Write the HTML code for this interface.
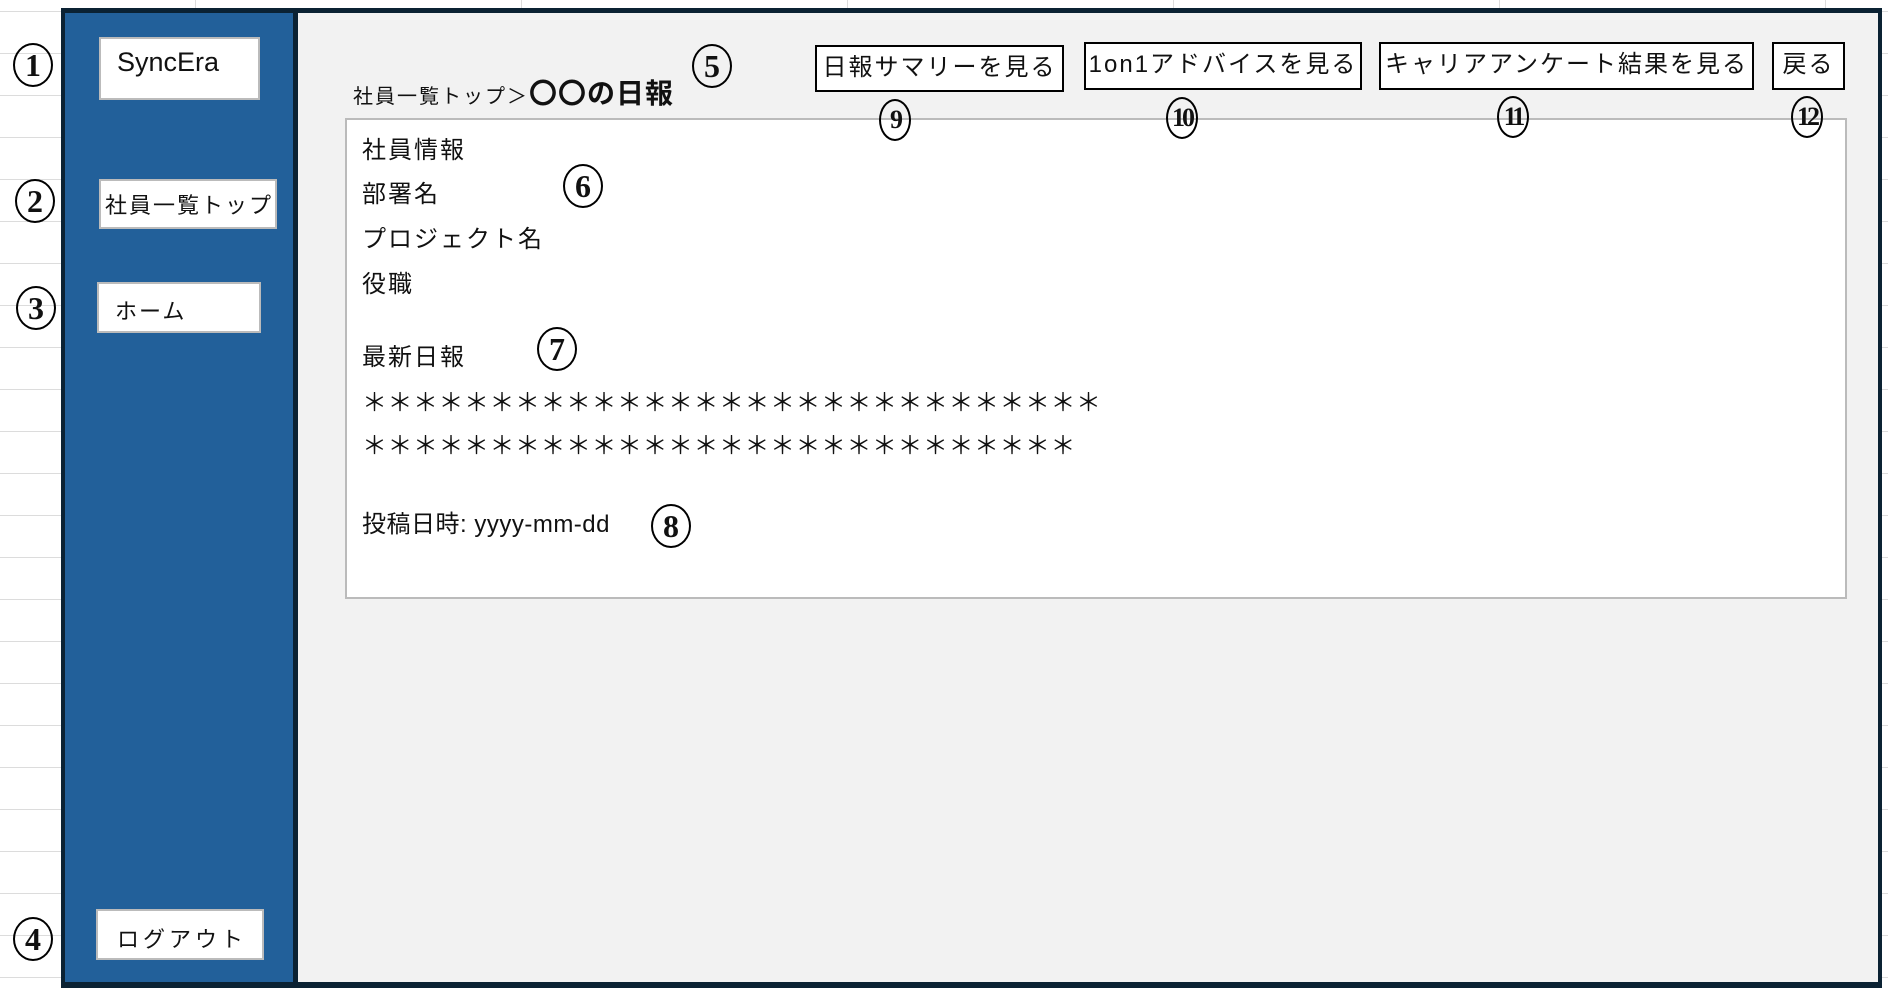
<!DOCTYPE html>
<html><head><meta charset="utf-8"><style>
*{margin:0;padding:0;box-sizing:border-box}
body{width:1888px;height:989px;position:relative;overflow:hidden;background:#fff;font-family:"Liberation Sans","Noto Sans CJK JP",sans-serif;color:#111}
.grid{position:absolute;left:0;top:0;width:1888px;height:989px;background:repeating-linear-gradient(to bottom,transparent 0,transparent 11px,#dcdcdc 11px,#dcdcdc 12px,transparent 12px,transparent 42px)}
.vgrid{position:absolute;left:0;top:0;width:1888px;height:10px;background:repeating-linear-gradient(to right,transparent 0,transparent 195px,#dcdcdc 195px,#dcdcdc 196px,transparent 196px,transparent 326px)}
.frame{position:absolute;left:61px;top:8px;width:1821px;height:980px;background:#0b2233}
.side{position:absolute;left:65px;top:13px;width:228px;height:969px;background:#22609a}
.main{position:absolute;left:298px;top:13px;width:1580px;height:969px;background:#f2f2f2}
.sb{position:absolute;background:#fff;border:2px solid #bbb;font-size:22px;white-space:nowrap}
.c{position:absolute;width:40px;height:44px;border:2px solid #000;border-radius:50%;font-family:"Liberation Serif",serif;font-weight:bold;font-size:32px;text-align:center;line-height:40px;background:transparent}
.cn{width:32px;height:42px;font-size:26px;letter-spacing:-3px;line-height:38px}
.btn{position:absolute;background:#fff;border:2px solid #000;font-size:24px;line-height:42px;white-space:nowrap;overflow:hidden;text-align:center;letter-spacing:2px}
.panel{position:absolute;left:345px;top:118px;width:1502px;height:481px;background:#fff;border:2px solid #bbb}
.t{position:absolute;left:362px;font-size:24px;white-space:nowrap;letter-spacing:2px}
</style></head><body>
<div class="grid"></div><div class="vgrid"></div>
<div class="frame"></div><div class="side"></div><div class="main"></div>
<div class="c" style="left:13px;top:43px">1</div>
<div class="c" style="left:15px;top:179px">2</div>
<div class="c" style="left:16px;top:286px">3</div>
<div class="c" style="left:13px;top:917px">4</div>
<div class="sb" style="left:99px;top:37px;width:161px;height:63px;font-size:27px;padding:8px 0 0 16px">SyncEra</div>
<div class="sb" style="left:99px;top:179px;width:178px;height:50px;padding:7px 0 0 4px;letter-spacing:2px">社員一覧トップ</div>
<div class="sb" style="left:97px;top:282px;width:164px;height:51px;padding:10px 0 0 16px;letter-spacing:2px">ホーム</div>
<div class="sb" style="left:96px;top:909px;width:168px;height:51px;padding:11px 0 0 19px;letter-spacing:4px">ログアウト</div>
<div style="position:absolute;left:353px;top:72px;font-size:20px;white-space:nowrap;letter-spacing:2px">社員一覧トップ＞<span style="font-size:28px;font-weight:bold;letter-spacing:1px">〇〇の日報</span></div>
<div class="c" style="left:692px;top:44px">5</div>
<div class="btn" style="left:815px;top:45px;width:249px;height:47px">日報サマリーを見る</div>
<div class="btn" style="left:1084px;top:42px;width:278px;height:48px">1on1アドバイスを見る</div>
<div class="btn" style="left:1379px;top:42px;width:375px;height:48px">キャリアアンケート結果を見る</div>
<div class="btn" style="left:1772px;top:42px;width:73px;height:48px">戻る</div>
<div class="panel"></div>
<div class="c cn" style="left:879px;top:99px">9</div>
<div class="c cn" style="left:1166px;top:97px">10</div>
<div class="c cn" style="left:1497px;top:96px">11</div>
<div class="c cn" style="left:1791px;top:96px">12</div>
<div class="t" style="top:130px">社員情報</div>
<div class="t" style="top:174px">部署名</div>
<div class="t" style="top:219px">プロジェクト名</div>
<div class="t" style="top:264px">役職</div>
<div class="t" style="top:337px">最新日報</div>
<div class="t" style="top:383px;font-size:25px;letter-spacing:0.5px">＊＊＊＊＊＊＊＊＊＊＊＊＊＊＊＊＊＊＊＊＊＊＊＊＊＊＊＊＊</div>
<div class="t" style="top:426px;font-size:25px;letter-spacing:0.5px">＊＊＊＊＊＊＊＊＊＊＊＊＊＊＊＊＊＊＊＊＊＊＊＊＊＊＊＊</div>
<div class="t" style="top:504px;letter-spacing:0.5px">投稿日時: yyyy-mm-dd</div>
<div class="c" style="left:563px;top:164px">6</div>
<div class="c" style="left:537px;top:327px">7</div>
<div class="c" style="left:651px;top:504px">8</div>
</body></html>
